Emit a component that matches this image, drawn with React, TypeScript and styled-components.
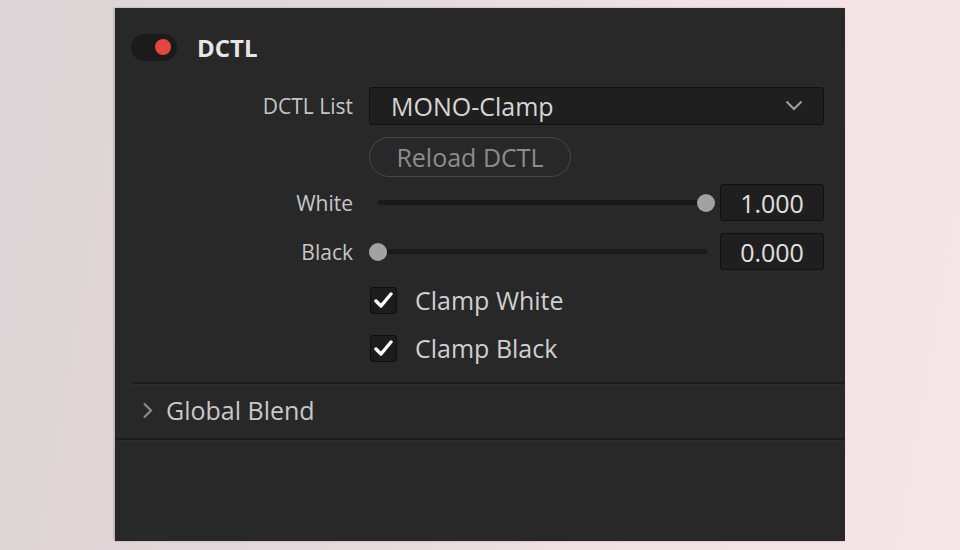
import styled, { createGlobalStyle } from "styled-components";

const GlobalStyle = createGlobalStyle`
  html, body {
    margin: 0;
    padding: 0;
  }
  body {
    font-family: "Open Sans", "Noto Sans", sans-serif;
    background: linear-gradient(100deg, #dcd4d6 0%, #e3d8db 35%, #efe1e4 65%, #f6e5e8 100%);
    min-height: 100vh;
  }
`;

const Page = styled.div`
  height: 550px;
  padding: 8px 0 0 115px;
  box-sizing: border-box;
`;

const Panel = styled.div`
  width: 730px;
  height: 533px;
  background: #282828;
  box-shadow: -1px 0 2px rgba(0, 0, 0, 0.25);
  display: flex;
  flex-direction: column;
`;

const Header = styled.div`
  height: 78px;
  display: flex;
  align-items: center;
  gap: 20px;
  padding-left: 16px;
`;

const Toggle = styled.div`
  width: 46px;
  height: 27px;
  border-radius: 14px;
  background: #1b1b1b;
  display: flex;
  align-items: center;
  justify-content: flex-end;
  padding-right: 6px;
  box-sizing: border-box;
`;

const Dot = styled.div`
  width: 16px;
  height: 16px;
  border-radius: 50%;
  background: #e5473e;
`;

const Title = styled.span`
  font-size: 24px;
  font-weight: 700;
  color: #e6e6e6;
`;

const Row = styled.div<{ $h: number; $mt: number }>`
  display: grid;
  grid-template-columns: 238px 1fr;
  grid-template-rows: 100%;
  column-gap: 16px;
  align-items: center;
  height: ${(p) => p.$h}px;
  margin-top: ${(p) => p.$mt}px;
  padding-right: 21px;
`;

const Label = styled.span`
  text-align: right;
  font-size: 21px;
  color: #c6c6c6;
`;

const Select = styled.div`
  height: 38px;
  box-sizing: border-box;
  background: #1f1f1f;
  border: 1px solid #111;
  border-radius: 3px;
  display: flex;
  align-items: center;
  justify-content: space-between;
  padding: 0 20px 1px 21px;
  font-size: 25px;
  color: #d6d6d6;
`;

const PillButton = styled.button`
  width: 202px;
  height: 40px;
  border-radius: 20px;
  border: 1px solid #474747;
  background: transparent;
  color: #8c8c8c;
  font-family: inherit;
  font-size: 25px;
  padding: 0 0 1px;
`;

const SliderLine = styled.div`
  display: flex;
  align-items: center;
  gap: 5px;
`;

const Slider = styled.div`
  flex: 1;
  height: 18px;
  position: relative;
  display: flex;
  align-items: center;
  padding: 0 8px 0 9px;
`;

const Track = styled.div`
  flex: 1;
  height: 5px;
  border-radius: 3px;
  background: #1a1a1a;
`;

const Thumb = styled.div`
  position: absolute;
  top: 0;
  width: 18px;
  height: 18px;
  margin-left: -9px;
  border-radius: 50%;
  background: #a2a2a2;
`;

const ValueBox = styled.div`
  width: 104px;
  height: 37px;
  box-sizing: border-box;
  background: #1f1f1f;
  border: 1px solid #111;
  border-radius: 3px;
  display: flex;
  align-items: center;
  justify-content: center;
  font-size: 25px;
  color: #e0e0e0;
`;

const CheckLine = styled.label`
  display: flex;
  align-items: center;
  gap: 18px;
  height: 28px;
  font-size: 25px;
  line-height: 28px;
  color: #cfcfcf;
  padding-left: 1px;
`;

const Box = styled.span`
  width: 27px;
  height: 27px;
  box-sizing: border-box;
  background: #1c1c1c;
  border: 1px solid #0e0e0e;
  border-radius: 3px;
  display: flex;
  align-items: center;
  justify-content: center;
`;

const Divider = styled.div<{ $indent: number; $mt: number }>`
  height: 2px;
  margin-top: ${(p) => p.$mt}px;
  margin-left: ${(p) => p.$indent}px;
  background: #1c1c1c;
  border-bottom: 1px solid #2e2e2e;
`;

const Section = styled.div`
  height: 53px;
  box-sizing: border-box;
  display: flex;
  align-items: center;
  gap: 13px;
  padding: 0 0 3px 27px;
  font-size: 25px;
  color: #c8c8c8;
`;

const Chevron = ({ dir }: { dir: "down" | "right" }) =>
  dir === "down" ? (
    <svg width="18" height="11" viewBox="0 0 18 11">
      <path d="M1.5 1.5 L9 9 L16.5 1.5" fill="none" stroke="#a0a0a0" strokeWidth="2" />
    </svg>
  ) : (
    <svg width="11" height="17" viewBox="0 0 11 17">
      <path d="M2 1.5 L9 8.5 L2 15.5" fill="none" stroke="#8a8a8a" strokeWidth="2.2" />
    </svg>
  );

const Check = () => (
  <svg width="19" height="17" viewBox="0 0 19 17">
    <path d="M2 9 L7 14 L17 2" fill="none" stroke="#fafafa" strokeWidth="3.4" strokeLinecap="round" strokeLinejoin="round" />
  </svg>
);

const SliderRow = ({ label, value, pos, mt }: { label: string; value: number; pos: number; mt: number }) => (
  <Row $h={37} $mt={mt}>
    <Label>{label}</Label>
    <SliderLine>
      <Slider>
        <Track />
        <Thumb style={{ left: `calc(9px + (100% - 18px) * ${pos})` }} />
      </Slider>
      <ValueBox>{value.toFixed(3)}</ValueBox>
    </SliderLine>
  </Row>
);

const CheckRow = ({ label, mt }: { label: string; mt: number }) => (
  <Row $h={28} $mt={mt}>
    <span />
    <CheckLine>
      <Box>
        <Check />
      </Box>
      {label}
    </CheckLine>
  </Row>
);

export default function App() {
  return (
    <>
      <GlobalStyle />
      <Page>
        <Panel>
          <Header>
            <Toggle>
              <Dot />
            </Toggle>
            <Title>DCTL</Title>
          </Header>

          <Row $h={38} $mt={1}>
            <Label>DCTL List</Label>
            <Select>
              MONO-Clamp
              <Chevron dir="down" />
            </Select>
          </Row>

          <Row $h={40} $mt={12}>
            <span />
            <PillButton>Reload DCTL</PillButton>
          </Row>

          <SliderRow label="White" value={1} pos={1} mt={7} />
          <SliderRow label="Black" value={0} pos={0} mt={12} />

          <CheckRow label="Clamp White" mt={16} />
          <CheckRow label="Clamp Black" mt={20} />

          <Divider $indent={18} $mt={20} />
          <Section>
            <Chevron dir="right" />
            Global Blend
          </Section>
          <Divider $indent={0} $mt={0} />
        </Panel>
      </Page>
    </>
  );
}
